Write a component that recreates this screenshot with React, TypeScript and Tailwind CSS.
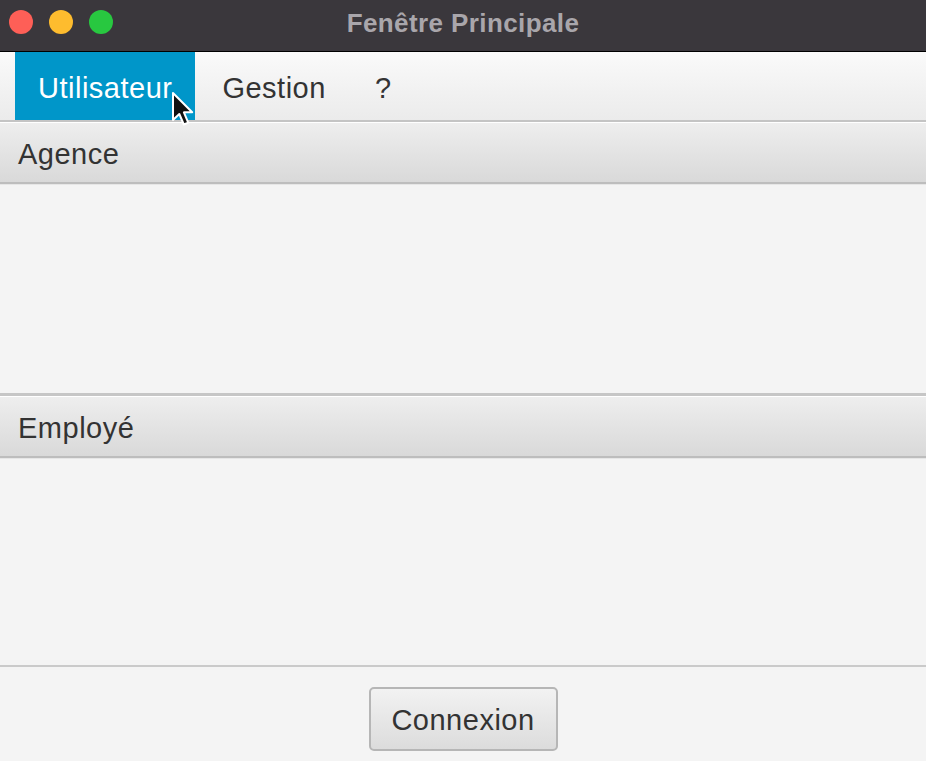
const font = "font-['Liberation_Sans',Arial,sans-serif]";

function TitledPaneHeader({ title }: { title: string }) {
  return (
    <div className="flex flex-col">
      <div className="h-[1px] bg-white" />
      <div className="flex h-[59px] items-center bg-gradient-to-b from-[#eeeeee] to-[#d9d9d9] px-[18px] pt-[4px]">
        <span className="text-[29px] tracking-[0.5px] text-[#333333]">{title}</span>
      </div>
      <div className="h-[2px] bg-[#bdbdbd]" />
      <div className="h-[1px] bg-[#e6e6e6]" />
    </div>
  );
}

function Cursor() {
  return (
    <svg
      className="absolute left-[171px] top-[91px]"
      width="26"
      height="40"
      viewBox="0 0 26 40"
    >
      <path
        d="M2 2 L2 29 L8.3 23 L12.8 33.5 L17.2 31.6 L12.9 21.3 L21.2 21.3 Z"
        fill="#111"
        stroke="#fff"
        strokeWidth="2"
        strokeLinejoin="round"
      />
    </svg>
  );
}

export default function App() {
  return (
    <div className={`relative flex h-[761px] w-[926px] flex-col overflow-hidden bg-[#f4f4f4] ${font}`}>
      {/* window title bar */}
      <div className="relative flex h-[51px] items-center justify-center bg-[#3a373c] pb-[5px]">
        <div className="absolute left-[9px] top-[10px] flex gap-[16px]">
          <span className="size-[24px] rounded-full bg-[#fe5f57]" />
          <span className="size-[24px] rounded-full bg-[#febc2e]" />
          <span className="size-[24px] rounded-full bg-[#28c840]" />
        </div>
        <span className="text-[26px] font-bold tracking-[0.4px] text-[#a9a6ab]">Fenêtre Principale</span>
      </div>
      <div className="h-[1px] bg-black" />

      {/* menu bar */}
      <div className="flex h-[68px] gap-[4px] bg-gradient-to-b from-[#fafafa] to-[#ebebeb] pl-[15px]">
        <div className="flex items-center bg-[#0096c9] px-[23px] pt-[5px] text-[29px] tracking-[0.5px] text-white">Utilisateur</div>
        <div className="flex items-center px-[23px] pt-[5px] text-[29px] tracking-[0.5px] text-[#333333]">Gestion</div>
        <div className="flex items-center px-[22px] pt-[5px] text-[29px] text-[#333333]">?</div>
      </div>
      <div className="h-[2px] bg-[#c4c4c4]" />

      {/* Agence */}
      <TitledPaneHeader title="Agence" />
      <div className="h-[208px] bg-[#f4f4f4]" />

      {/* Employé */}
      <div className="h-[3px] bg-[#c6c6c6]" />
      <TitledPaneHeader title="Employé" />
      <div className="flex-1 bg-[#f4f4f4]" />

      {/* footer */}
      <div className="h-[2px] bg-[#cacaca]" />
      <div className="flex h-[94px] justify-center pt-[20px]">
        <button className="flex h-[64px] w-[189px] items-center justify-center rounded-[5px] border-2 border-[#b6b6b6] bg-gradient-to-b from-[#f2f2f2] to-[#dcdcdc] pt-[3px] text-[29px] tracking-[0.5px] text-[#333333]">
          Connexion
        </button>
      </div>

      <Cursor />
    </div>
  );
}
